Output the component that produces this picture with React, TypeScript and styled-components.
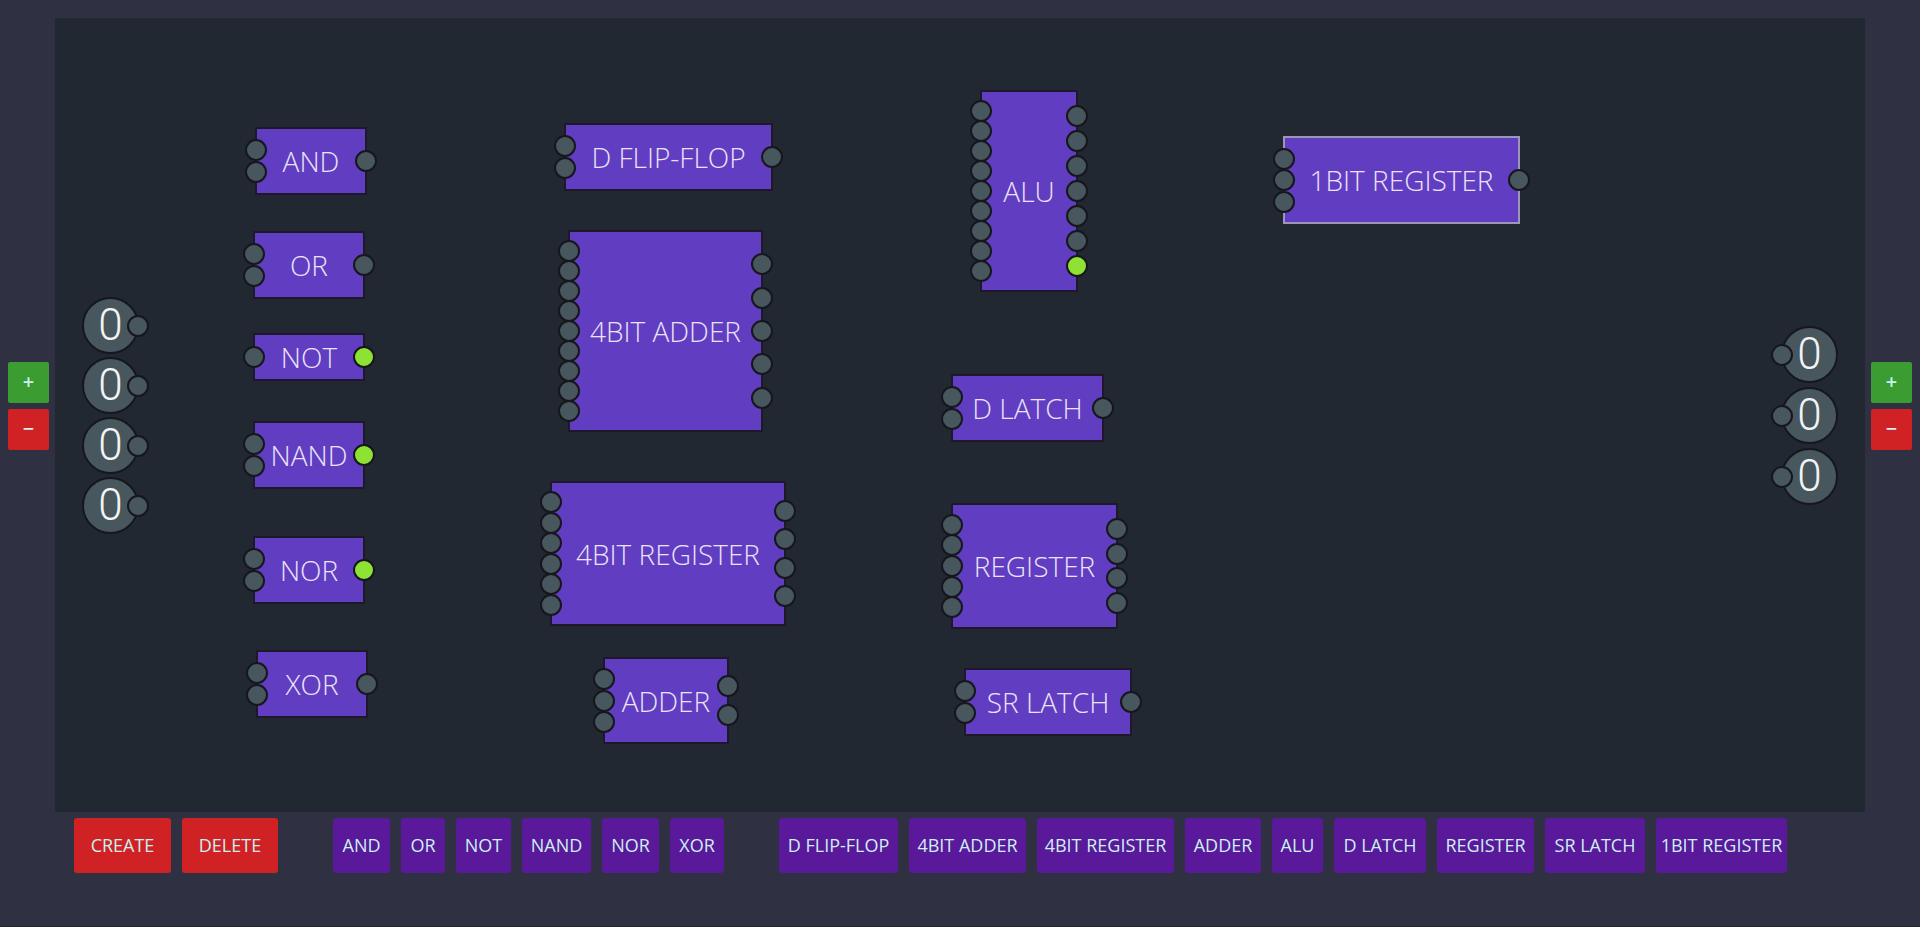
import React, { useState } from 'react';
import styled, { createGlobalStyle } from 'styled-components';

const color = {
  page: '#2f3142',
  canvas: '#222831',
  chip: '#613dc1',
  chipText: '#ebe3f8',
  outline: '#15171d',
  chipOutline: '#1d182c',
  off: '#48565e',
  on: '#8ee233',
  red: '#d02224',
  green: '#3a9c31',
  violet: '#5a189a',
  buttonText: '#caf0f1',
};

const GlobalStyle = createGlobalStyle`
  *, *::before, *::after { box-sizing: border-box; }
  body {
    margin: 0;
    background: ${color.page};
    font-family: 'Open Sans', 'Noto Sans', sans-serif;
  }
`;

const Page = styled.div`
  display: grid;
  grid-template-columns: 55px minmax(0, 1fr) 55px;
  grid-template-rows: minmax(740px, 1fr) auto;
  min-height: 100vh;
  padding-top: 18px;
  border-bottom: 1px solid #25222e;
`;

const SideBar = styled.aside<{ $side: 'left' | 'right' }>`
  display: flex;
  flex-direction: column;
  align-items: ${(p) => (p.$side === 'left' ? 'flex-end' : 'flex-start')};
  justify-content: center;
  gap: 6px;
  padding: 0 6px 18px;
`;

const PinButton = styled.button<{ $tone: string }>`
  width: 41px;
  height: 41px;
  padding: 0 0 2px;
  border: 0;
  border-radius: 2px;
  background: ${(p) => p.$tone};
  color: ${color.buttonText};
  font: 600 20px/24px 'Open Sans', sans-serif;
  cursor: pointer;
`;

const Canvas = styled.main`
  position: relative;
  display: flex;
  align-items: center;
  justify-content: space-between;
  padding: 0 27px;
  background: ${color.canvas};
`;

const Terminals = styled.div<{ $gap: number }>`
  display: flex;
  flex-direction: column;
  gap: ${(p) => p.$gap}px;
`;

const Pin = styled.span<{ $on?: boolean }>`
  width: 22px;
  height: 22px;
  border: 2px solid ${color.outline};
  border-radius: 50%;
  background: ${(p) => (p.$on ? color.on : color.off)};
`;

const Terminal = styled.button<{ $on?: boolean }>`
  position: relative;
  display: flex;
  align-items: center;
  justify-content: center;
  width: 57px;
  height: 57px;
  padding: 0;
  border: 2px solid ${color.outline};
  border-radius: 50%;
  background: ${(p) => (p.$on ? color.on : color.off)};
  color: #f2f4f4;
  font: 300 44px/48px Roboto, sans-serif;
  cursor: pointer;
`;

const TerminalPin = styled(Pin)<{ $side: 'left' | 'right' }>`
  position: absolute;
  top: 16px;
  ${(p) => p.$side}: -12px;
`;

const Chip = styled.div<{
  $x: number;
  $y: number;
  $w: number;
  $h: number;
  $selected?: boolean;
}>`
  position: absolute;
  left: ${(p) => p.$x}px;
  top: ${(p) => p.$y}px;
  display: flex;
  align-items: center;
  justify-content: center;
  width: ${(p) => p.$w}px;
  height: ${(p) => p.$h}px;
  border: 2px solid ${(p) => (p.$selected ? '#9d95ba' : color.chipOutline)};
  background: ${color.chip};
  color: ${color.chipText};
  font-size: 28px;
  font-weight: 300;
  line-height: 36px;
  white-space: nowrap;
`;

const PinRail = styled.div<{ $side: 'left' | 'right' }>`
  position: absolute;
  top: -1px;
  bottom: -1px;
  ${(p) => p.$side}: -12px;
  display: flex;
  flex-direction: column;
  justify-content: space-evenly;

  ${Pin} {
    flex: none;
    margin: -11px 0;
  }
`;

const Toolbar = styled.nav`
  grid-column: 1 / -1;
  display: flex;
  flex-wrap: wrap;
  gap: 11px 55px;
  padding: 6px 20px 53px 74px;
`;

const ToolGroup = styled.div`
  display: flex;
  flex-wrap: wrap;
  gap: 11px;
`;

const ToolButton = styled.button<{ $w: number; $tone?: string }>`
  width: ${(p) => p.$w}px;
  height: 55px;
  padding: 0 0 2px;
  border: 0;
  border-radius: 3px;
  background: ${(p) => p.$tone ?? color.violet};
  color: ${color.buttonText};
  font: 500 18px/24px 'Open Sans', 'Noto Sans', sans-serif;
  white-space: nowrap;
  cursor: pointer;
`;

type ChipData = {
  name: string;
  x: number;
  y: number;
  w: number;
  h: number;
  inputs: number;
  outputs: boolean[];
  selected?: boolean;
};

const off = (n: number): boolean[] => Array(n).fill(false);

const chips: ChipData[] = [
  { name: 'AND', x: 200, y: 109, w: 112, h: 68, inputs: 2, outputs: [false] },
  { name: 'OR', x: 198, y: 213, w: 112, h: 68, inputs: 2, outputs: [false] },
  { name: 'NOT', x: 198, y: 315, w: 112, h: 48, inputs: 1, outputs: [true] },
  { name: 'NAND', x: 198, y: 403, w: 112, h: 68, inputs: 2, outputs: [true] },
  { name: 'NOR', x: 198, y: 518, w: 112, h: 68, inputs: 2, outputs: [true] },
  { name: 'XOR', x: 201, y: 632, w: 112, h: 68, inputs: 2, outputs: [false] },
  { name: 'D FLIP-FLOP', x: 509, y: 105, w: 209, h: 68, inputs: 2, outputs: [false] },
  { name: '4BIT ADDER', x: 513, y: 212, w: 195, h: 202, inputs: 9, outputs: off(5) },
  { name: '4BIT REGISTER', x: 495, y: 463, w: 236, h: 145, inputs: 6, outputs: off(4) },
  { name: 'ADDER', x: 548, y: 639, w: 126, h: 87, inputs: 3, outputs: off(2) },
  { name: 'ALU', x: 925, y: 72, w: 98, h: 202, inputs: 9, outputs: [...off(6), true] },
  { name: 'D LATCH', x: 896, y: 356, w: 153, h: 68, inputs: 2, outputs: [false] },
  { name: 'REGISTER', x: 896, y: 485, w: 167, h: 126, inputs: 5, outputs: off(4) },
  { name: 'SR LATCH', x: 909, y: 650, w: 168, h: 68, inputs: 2, outputs: [false] },
  { name: '1BIT REGISTER', x: 1228, y: 118, w: 237, h: 88, inputs: 3, outputs: [false], selected: true },
];

const gateTools: [string, number][] = [
  ['AND', 57],
  ['OR', 44],
  ['NOT', 55],
  ['NAND', 69],
  ['NOR', 57],
  ['XOR', 54],
];

const chipTools: [string, number][] = [
  ['D FLIP-FLOP', 119],
  ['4BIT ADDER', 117],
  ['4BIT REGISTER', 137],
  ['ADDER', 76],
  ['ALU', 51],
  ['D LATCH', 92],
  ['REGISTER', 97],
  ['SR LATCH', 100],
  ['1BIT REGISTER', 131],
];

type SideControlsProps = {
  side: 'left' | 'right';
  label: string;
  onChange: (step: number) => void;
};

function SideControls({ side, label, onChange }: SideControlsProps) {
  return (
    <SideBar $side={side}>
      <PinButton $tone={color.green} aria-label={`Add ${label}`} onClick={() => onChange(1)}>
        +
      </PinButton>
      <PinButton $tone={color.red} aria-label={`Remove ${label}`} onClick={() => onChange(-1)}>
        −
      </PinButton>
    </SideBar>
  );
}

export default function App() {
  const [inputs, setInputs] = useState<boolean[]>(off(4));
  const [outputs, setOutputs] = useState<boolean[]>(off(3));

  const resize = (list: boolean[], step: number) =>
    step > 0 ? [...list, false] : list.slice(0, -1);

  return (
    <>
      <GlobalStyle />
      <Page>
        <SideControls side="left" label="input" onChange={(s) => setInputs(resize(inputs, s))} />
        <Canvas>
          <Terminals $gap={3}>
            {inputs.map((on, i) => (
              <Terminal
                key={i}
                $on={on}
                onClick={() => setInputs(inputs.map((v, j) => (j === i ? !v : v)))}
              >
                {on ? 1 : 0}
                <TerminalPin $side="right" $on={on} />
              </Terminal>
            ))}
          </Terminals>
          {chips.map((c) => (
            <Chip key={c.name} $x={c.x} $y={c.y} $w={c.w} $h={c.h} $selected={c.selected}>
              {c.name}
              <PinRail $side="left">
                {off(c.inputs).map((_, i) => (
                  <Pin key={i} />
                ))}
              </PinRail>
              <PinRail $side="right">
                {c.outputs.map((on, i) => (
                  <Pin key={i} $on={on} />
                ))}
              </PinRail>
            </Chip>
          ))}
          <Terminals $gap={4}>
            {outputs.map((on, i) => (
              <Terminal key={i} $on={on}>
                {on ? 1 : 0}
                <TerminalPin $side="left" $on={on} />
              </Terminal>
            ))}
          </Terminals>
        </Canvas>
        <SideControls side="right" label="output" onChange={(s) => setOutputs(resize(outputs, s))} />
        <Toolbar>
          <ToolGroup>
            <ToolButton $w={97} $tone={color.red}>CREATE</ToolButton>
            <ToolButton $w={96} $tone={color.red}>DELETE</ToolButton>
          </ToolGroup>
          <ToolGroup>
            {gateTools.map(([name, w]) => (
              <ToolButton key={name} $w={w}>{name}</ToolButton>
            ))}
          </ToolGroup>
          <ToolGroup>
            {chipTools.map(([name, w]) => (
              <ToolButton key={name} $w={w}>{name}</ToolButton>
            ))}
          </ToolGroup>
        </Toolbar>
      </Page>
    </>
  );
}
